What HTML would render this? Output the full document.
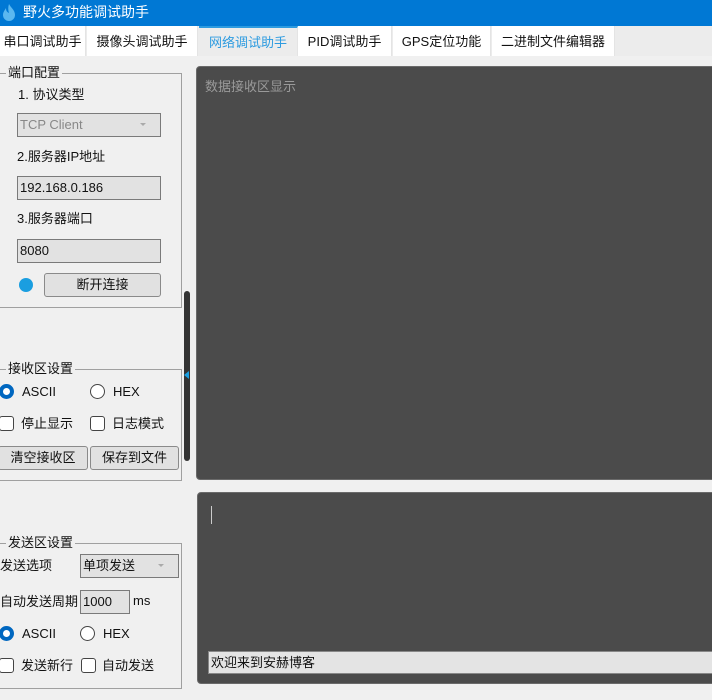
<!DOCTYPE html>
<html><head><meta charset="utf-8"><style>
*{box-sizing:border-box;margin:0;padding:0}
body{width:712px;height:700px;overflow:hidden;background:#f0f0f0;font-family:"Liberation Sans","Noto Sans CJK SC",sans-serif;font-size:13px;color:#111;position:relative}
.a{position:absolute;white-space:nowrap;line-height:16px}
.title{left:0;top:0;width:712px;height:26px;background:#0078d4;color:#fff;font-size:14px}
.tabs{left:0;top:26px;width:712px;height:30px;background:#ececec}
.tab{position:absolute;top:0;height:30px;background:#fff;line-height:32px;font-size:13px;text-align:center;border-right:1px solid #e4e4e4}
.grp{position:absolute;border:1px solid #a0a0a0}
.gt{position:absolute;background:#f0f0f0;padding:0 2px;line-height:14px}
.inp{position:absolute;background:#e2e2e2;border:1px solid #7a7a7a;padding-left:2px;line-height:21px}
.btn{position:absolute;background:#e1e1e1;border:1px solid #8a8a8a;border-radius:3px;text-align:center;line-height:21px}
.rad{position:absolute;width:15px;height:15px;border-radius:50%;border:1px solid #444;background:#fff}
.rad.on{border:4px solid #0067c0}
.chk{position:absolute;width:15px;height:15px;border-radius:3px;border:1px solid #444;background:#fff}
.dark{position:absolute;background:#4b4b4b;border:1px solid #6a6a6a;border-radius:4px}
.arr{position:absolute;right:14px;top:9px;width:0;height:0;border-left:3px solid transparent;border-right:3px solid transparent;border-top:3px solid #aaa}
</style></head><body>
<div class="a title" style="line-height:normal"><svg style="position:absolute;left:2px;top:3px" width="14" height="19" viewBox="0 0 14 19"><path d="M7 1C9 5 13 7 13 12a6 6 0 0 1-12 0C1 9 3 7 4 5c0 3 1 4 3 5C6 7 6 4 7 1z" fill="#5bb8f0"/></svg><span class="a" style="left:23px;top:4px">野火多功能调试助手</span></div>
<div class="a tabs">
<div class="tab" style="left:0;width:86px">串口调试助手</div>
<div class="tab" style="left:87px;width:111px">摄像头调试助手</div>
<div class="tab" style="left:199px;width:99px;background:#ececec;color:#2d9be0;border-top:2px solid #2d9be0;line-height:30px">网络调试助手</div>
<div class="tab" style="left:298px;width:94px">PID调试助手</div>
<div class="tab" style="left:393px;width:98px">GPS定位功能</div>
<div class="tab" style="left:492px;width:123px">二进制文件编辑器</div>
</div>

<div class="grp" style="left:-1px;top:73px;width:183px;height:235px"></div>
<div class="gt" style="left:6px;top:66px">端口配置</div>
<div class="a" style="left:18px;top:87px">1. 协议类型</div>
<div class="inp" style="left:17px;top:113px;width:144px;height:24px;color:#888">TCP Client<div class="arr"></div></div>
<div class="a" style="left:17px;top:149px">2.服务器IP地址</div>
<div class="inp" style="left:17px;top:176px;width:144px;height:24px">192.168.0.186</div>
<div class="a" style="left:17px;top:211px">3.服务器端口</div>
<div class="inp" style="left:17px;top:239px;width:144px;height:24px">8080</div>
<div class="a" style="left:19px;top:278px;width:14px;height:14px;border-radius:50%;background:#1a9ee0"></div>
<div class="btn" style="left:44px;top:273px;width:117px;height:24px">断开连接</div>

<div class="a" style="left:184px;top:291px;width:6px;height:170px;background:#333;border-radius:3px"></div>
<div class="a" style="left:184px;top:371px;width:0;height:0;border-top:4px solid transparent;border-bottom:4px solid transparent;border-right:5px solid #1a9ee0"></div>

<div class="grp" style="left:-1px;top:369px;width:183px;height:112px"></div>
<div class="gt" style="left:6px;top:362px">接收区设置</div>
<div class="rad on" style="left:-1px;top:384px"></div><div class="a" style="left:22px;top:384px">ASCII</div>
<div class="rad" style="left:90px;top:384px"></div><div class="a" style="left:113px;top:384px">HEX</div>
<div class="chk" style="left:-1px;top:416px"></div><div class="a" style="left:21px;top:416px">停止显示</div>
<div class="chk" style="left:90px;top:416px"></div><div class="a" style="left:112px;top:416px">日志模式</div>
<div class="btn" style="left:-2px;top:446px;width:90px;height:24px">清空接收区</div>
<div class="btn" style="left:90px;top:446px;width:89px;height:24px">保存到文件</div>

<div class="grp" style="left:-1px;top:543px;width:183px;height:146px"></div>
<div class="gt" style="left:6px;top:536px">发送区设置</div>
<div class="a" style="left:0;top:558px">发送选项</div>
<div class="inp" style="left:80px;top:554px;width:99px;height:24px">单项发送<div class="arr"></div></div>
<div class="a" style="left:0;top:594px">自动发送周期</div>
<div class="inp" style="left:80px;top:590px;width:50px;height:24px">1000</div>
<div class="a" style="left:133px;top:593px">ms</div>
<div class="rad on" style="left:-1px;top:626px"></div><div class="a" style="left:22px;top:626px">ASCII</div>
<div class="rad" style="left:80px;top:626px"></div><div class="a" style="left:103px;top:626px">HEX</div>
<div class="chk" style="left:-1px;top:658px"></div><div class="a" style="left:21px;top:658px">发送新行</div>
<div class="chk" style="left:81px;top:658px"></div><div class="a" style="left:102px;top:658px">自动发送</div>

<div class="dark" style="left:196px;top:66px;width:520px;height:414px"><div class="a" style="left:8px;top:12px;color:#9a9a9a">数据接收区显示</div></div>
<div class="dark" style="left:197px;top:492px;width:520px;height:192px">
<div class="a" style="left:13px;top:13px;width:1px;height:18px;background:#ccc"></div>
<div class="a" style="left:10px;top:158px;width:520px;height:23px;background:#e4e4e4;border:1px solid #888;line-height:21px;padding-left:2px;color:#111">欢迎来到安赫博客</div>
</div>
</body></html>
